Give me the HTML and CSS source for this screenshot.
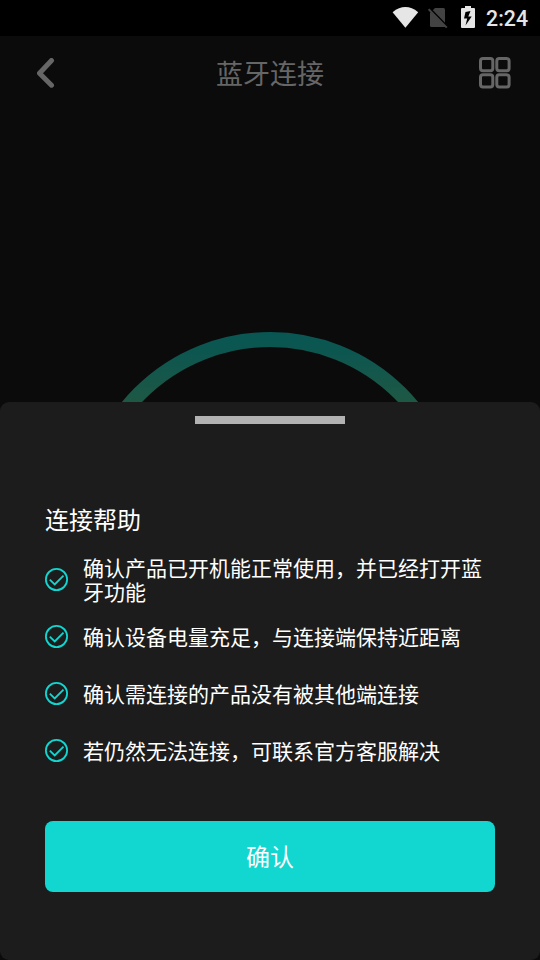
FILE: index.html
```html
<!DOCTYPE html>
<html lang="zh-CN">
<head>
<meta charset="utf-8">
<title>蓝牙连接</title>
<link rel="stylesheet" href="styles.css">
</head>
<body>
<svg class="defs" width="0" height="0" aria-hidden="true">
  <symbol id="check" viewBox="0 0 23 23">
    <circle cx="11.5" cy="11.5" r="10.6"/>
    <path d="M4.8 11.6 9.7 16.4 18.5 7.6"/>
  </symbol>
</svg>
<div class="screen">
  <div class="status">
    <svg class="wifi" width="28" height="22" viewBox="0 0 28 22"><path d="M1.6 6.2Q14.4-4 27.2 6.2L14.4 21.8Z"/></svg>
    <svg class="sim" width="20" height="20" viewBox="0 0 20 20"><path class="card" d="M7 0H15.5Q17 0 17 1.5V19H3.5Q2 19 2 17.5V5Z"/><path class="cut" d="M1.5 .2 20 19.2"/><path class="slash" d="M.6 1.2 18.8 19.6"/></svg>
    <svg class="battery" width="14" height="22" viewBox="0 0 14 22"><path d="M4 0H10V2H13Q14 2 14 3V21Q14 22 13 22H1Q0 22 0 21V3Q0 2 1 2H4Z"/><path class="bolt" d="M9.5 5 4.5 6 3 12.5H6.2L4.5 19.5 10.7 10.5H7.3Z"/></svg>
    <span class="time">2:24</span>
  </div>
  <header class="nav">
    <svg width="18" height="30" viewBox="0 0 18 30"><path d="M14.5 2.5 2.5 15.2 14.5 27.2"/></svg>
    <h1>蓝牙连接</h1>
    <svg class="grid" width="32" height="32" viewBox="0 0 32 32"><rect x="1.5" y="1.5" width="12.3" height="12.3" rx="2.5"/><rect x="17.8" y="1.5" width="12.3" height="12.3" rx="2.5"/><rect x="1.5" y="17.8" width="12.3" height="12.3" rx="2.5"/><rect x="17.8" y="17.8" width="12.3" height="12.3" rx="2.5"/></svg>
  </header>
  <main class="scanner">
    <svg width="384" height="70" viewBox="0 0 384 70">
      <defs><linearGradient id="ring" gradientUnits="userSpaceOnUse" x1="0" y1="0" x2="0" y2="70"><stop offset="0" stop-color="#085653"/><stop offset=".3" stop-color="#0d5650"/><stop offset="1" stop-color="#1e5844"/></linearGradient></defs>
      <circle cx="192" cy="191.5" r="184" stroke="url(#ring)"/>
    </svg>
  </main>
  <section class="sheet">
    <div class="handle"></div>
    <h2>连接帮助</h2>
    <ul>
      <li><svg width="23" height="23"><use href="#check"/></svg><p>确认产品已开机能正常使用，并已经打开蓝牙功能</p></li>
      <li><svg width="23" height="23"><use href="#check"/></svg><p>确认设备电量充足，与连接端保持近距离</p></li>
      <li><svg width="23" height="23"><use href="#check"/></svg><p>确认需连接的产品没有被其他端连接</p></li>
      <li><svg width="23" height="23"><use href="#check"/></svg><p>若仍然无法连接，可联系官方客服解决</p></li>
    </ul>
    <button>确认</button>
  </section>
</div>
</body>
</html>
```
FILE: styles.css
```css
* { box-sizing: border-box; margin: 0; padding: 0; }
body { background: #0b0b0b; font-family: "Noto Sans CJK SC", sans-serif; }
.defs { display: none; }
.screen { width: 540px; height: 960px; display: flex; flex-direction: column; overflow: hidden; }
.status { height: 36px; background: #000; display: flex; align-items: flex-start; padding: 6px 12px 0 391px; fill: #e6e6e6; flex: none; }
.sim { margin: 2px 0 0 9px; }
.sim .card { fill: #434343; }
.sim .cut { fill: none; stroke: #000; stroke-width: 2; }
.sim .slash { fill: none; stroke: #434343; stroke-width: 2; }
.battery { margin-left: 13px; }
.battery .bolt { fill: #000; }
.time { margin-left: auto; font: 500 21.3px/26px Roboto, sans-serif; color: #e6e6e6; white-space: nowrap; }
.nav { height: 74px; flex: none; display: flex; justify-content: space-between; align-items: center; padding: 0 29px 0 37px; }
.nav svg { fill: none; stroke: #666; stroke-width: 5; stroke-linecap: round; stroke-linejoin: round; }
.nav .grid { stroke-width: 3; }
.nav h1 { font-size: 27px; line-height: 40px; font-weight: 400; color: #666; margin: 0 0 1px 6px; }
.scanner { height: 292px; flex: none; display: flex; justify-content: center; align-items: flex-end; }
.scanner svg { display: block; fill: none; stroke-width: 15; }
.sheet { flex: 1; background: #1c1c1c; border-radius: 9px; padding: 14px 45px 0; color: #fff; }
.handle { width: 150px; height: 8px; margin: 0 auto; background: #b2b2b2; }
.sheet h2 { font-size: 24px; line-height: 36px; font-weight: 400; margin-top: 77px; }
.sheet ul { list-style: none; margin-top: 14px; }
.sheet li { height: 57px; display: flex; align-items: center; gap: 15px; }
.sheet li svg { flex: none; fill: none; stroke: #12d6d0; stroke-width: 1.8; }
.sheet p { font-size: 21px; line-height: 24px; width: 412px; padding-bottom: 2px; }
.sheet button { display: block; width: 450px; height: 71px; padding-bottom: 2px; margin-top: 42px; border: 0; border-radius: 8px; background: #12d6d0; color: #fff; font: 24px/36px "Noto Sans CJK SC", sans-serif; }
```
